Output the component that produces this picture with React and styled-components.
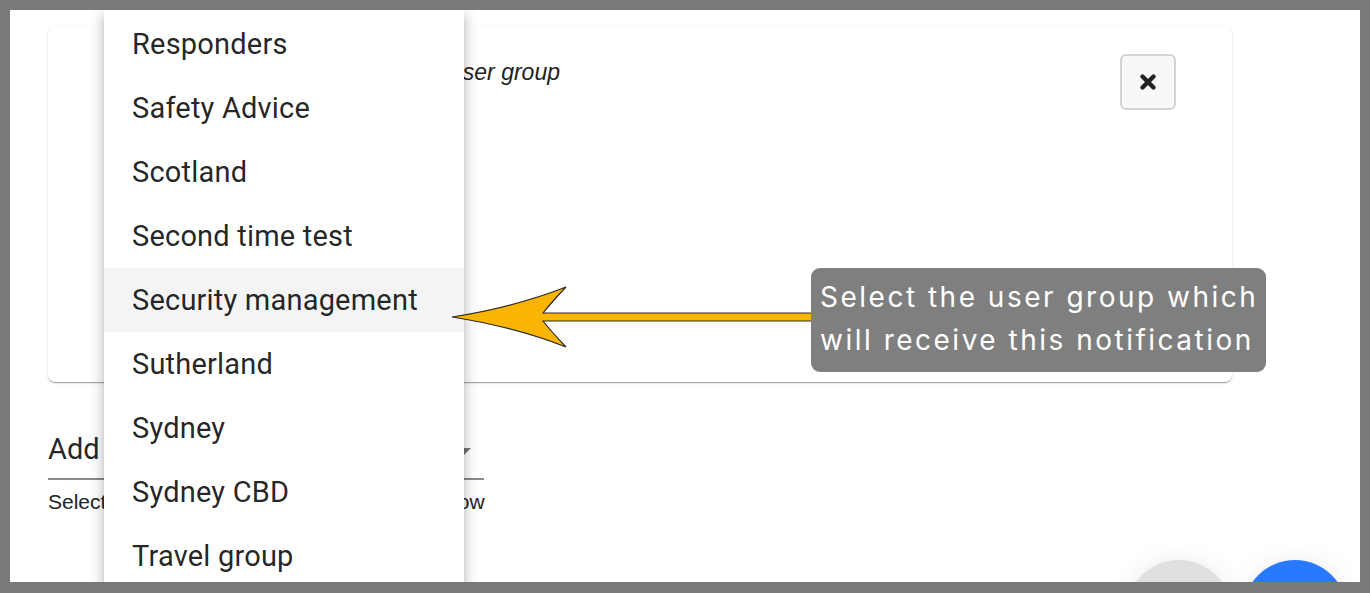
import React from "react";
import styled, { createGlobalStyle } from "styled-components";

const GlobalStyle = createGlobalStyle`
  html, body { margin: 0; padding: 0; }
  body {
    background: #7a7879;
    overflow: hidden;
    font-family: "Liberation Sans", Arial, sans-serif;
  }
  * { box-sizing: border-box; }
`;

const Frame = styled.div`
  width: 1370px;
  height: 593px;
  padding: 10px 10px 11px 10px;
`;

const Screen = styled.div`
  position: relative;
  width: 100%;
  height: 100%;
  background: #ffffff;
  overflow: hidden;
`;

const Content = styled.div`
  display: flex;
  flex-direction: column;
  padding: 16px 128px 0 38px;
`;

const Card = styled.div`
  height: 356px;
  background: #fff;
  border-radius: 7px;
  box-shadow: 0 2px 1px -1px rgba(0, 0, 0, 0.2), 0 1px 1px 0 rgba(0, 0, 0, 0.14),
    0 1px 3px 0 rgba(0, 0, 0, 0.12);
  display: flex;
  justify-content: space-between;
  align-items: flex-start;
  padding: 28px 56px 0 32px;
`;

const Note = styled.p`
  width: 480px;
  margin: 5px 0 0 0;
  text-align: right;
  font-family: "Liberation Sans", Arial, sans-serif;
  font-style: italic;
  font-size: 23px;
  color: #222;
  white-space: nowrap;
`;

const CloseButton = styled.button`
  width: 56px;
  height: 56px;
  flex: none;
  border: 2px solid #d4d4d4;
  border-radius: 6px;
  background: #f7f8fa;
  display: flex;
  align-items: center;
  justify-content: center;
  padding: 0;
  color: #222;
`;

const SelectField = styled.div`
  width: 436px;
  margin-top: 48px;
  display: flex;
  flex-direction: column;
`;

const SelectInput = styled.div`
  position: relative;
  height: 50px;
  border-bottom: 2px solid #8a8a8a;
  display: flex;
  align-items: flex-end;
  padding-bottom: 14px;
  line-height: 1;
  font-family: Roboto, "Liberation Sans", sans-serif;
  font-size: 29px;
  color: rgba(0, 0, 0, 0.87);
`;

const Caret = styled.span`
  position: absolute;
  right: 13px;
  top: 18px;
  width: 0;
  height: 0;
  border-left: 7px solid transparent;
  border-right: 7px solid transparent;
  border-top: 7px solid #757575;
`;

const Helper = styled.div`
  margin-top: 10px;
  font-family: "Liberation Sans", Arial, sans-serif;
  font-size: 21px;
  color: #222;
  white-space: nowrap;
`;

const Menu = styled.ul`
  position: absolute;
  left: 94px;
  top: 0;
  width: 360px;
  height: 620px;
  margin: 0;
  padding: 2px 0 0 0;
  list-style: none;
  background: #fff;
  box-shadow: 0 5px 5px -3px rgba(0, 0, 0, 0.2), 0 8px 10px 1px rgba(0, 0, 0, 0.14),
    0 3px 14px 2px rgba(0, 0, 0, 0.12);
`;

const MenuItem = styled.li`
  height: 64px;
  line-height: 64px;
  padding-left: 28px;
  font-family: Roboto, "Liberation Sans", sans-serif;
  font-size: 29px;
  letter-spacing: 0.2px;
  color: rgba(0, 0, 0, 0.87);
  background: ${(p) => (p.$active ? "#f4f4f4" : "transparent")};
  white-space: nowrap;
`;

const ArrowSvg = styled.svg`
  position: absolute;
  left: 430px;
  top: 270px;
`;

const Callout = styled.div`
  position: absolute;
  left: 801px;
  top: 258px;
  width: 455px;
  height: 104px;
  border-radius: 9px;
  background: #7f7f7f;
  color: #fff;
  padding: 8px 0 0 9px;
  font-family: Inter, Lato, sans-serif;
  font-size: 28px;
  line-height: 43px;
  letter-spacing: 2.5px;
  white-space: nowrap;
`;

const FabRow = styled.div`
  position: absolute;
  left: 1117px;
  top: 550px;
  display: flex;
  gap: 12px;
`;

const Fab = styled.div`
  width: 104px;
  height: 104px;
  border-radius: 50%;
  background: ${(p) => (p.$primary ? "#2979ff" : "#e0e0e0")};
  box-shadow: 0 3px 5px -1px rgba(0, 0, 0, 0.12), 0 6px 10px 0 rgba(0, 0, 0, 0.08),
    0 1px 28px 0 rgba(0, 0, 0, 0.08);
`;

const groups = [
  "Responders",
  "Safety Advice",
  "Scotland",
  "Second time test",
  "Security management",
  "Sutherland",
  "Sydney",
  "Sydney CBD",
  "Travel group",
];

export default function App() {
  return (
    <>
      <GlobalStyle />
      <Frame>
        <Screen>
          <Content>
            <Card>
              <Note>Recipients: please select a user group</Note>
              <CloseButton aria-label="close">
                <svg width="18" height="18" viewBox="0 0 18 18">
                  <path
                    d="M3.5 3.5 L14.5 14.5 M14.5 3.5 L3.5 14.5"
                    stroke="#222"
                    strokeWidth="4.4"
                    strokeLinecap="round"
                  />
                </svg>
              </CloseButton>
            </Card>
            <SelectField>
              <SelectInput>
                Add user group
                <Caret />
              </SelectInput>
              <Helper>Select a user group to notify from the list below</Helper>
            </SelectField>
          </Content>

          <Menu>
            {groups.map((g) => (
              <MenuItem key={g} $active={g === "Security management"}>
                {g}
              </MenuItem>
            ))}
          </Menu>

          <ArrowSvg width="380" height="75" viewBox="0 0 380 75">
            <path
              d="M 12 37 Q 75 27 126 7 Q 110 24 103 33 L 380 33 L 380 41 L 103 41 Q 110 50 126 67 Q 75 47 12 37 Z"
              fill="#fbb400"
              stroke="#2a2a2a"
              strokeWidth="1.2"
              strokeLinejoin="miter"
            />
          </ArrowSvg>

          <Callout>
            Select the user group which
            <br />
            will receive this notification
          </Callout>

          <FabRow>
            <Fab />
            <Fab $primary />
          </FabRow>
        </Screen>
      </Frame>
    </>
  );
}
